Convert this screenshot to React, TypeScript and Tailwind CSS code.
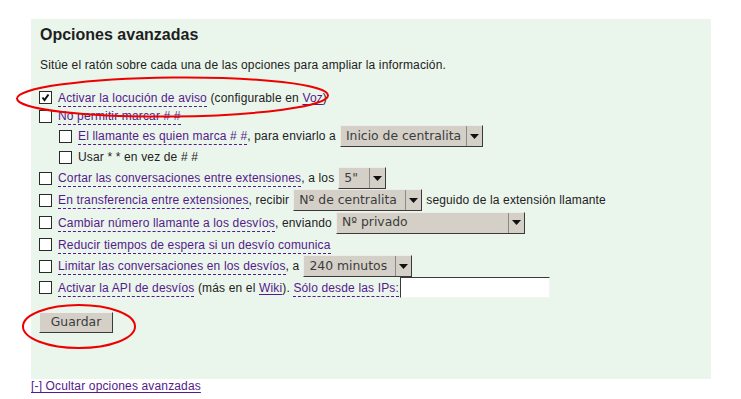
import React from 'react';

const Dashed: React.FC<{ children: React.ReactNode }> = ({ children }) => (
  <span className="text-[#551a8b] border-b border-dashed border-[#551a8b] pb-[1px]">{children}</span>
);

const Link: React.FC<{ children: React.ReactNode }> = ({ children }) => (
  <span className="text-[#551a8b] underline underline-offset-[2px]">{children}</span>
);

const Check: React.FC<{ checked?: boolean }> = ({ checked }) => (
  <span className="w-[13px] h-[13px] shrink-0 border border-[#2a2a2a] bg-white flex items-center justify-center">
    {checked && (
      <svg width="11" height="11" viewBox="0 0 11 11">
        <path d="M2.5 5.5 L4.5 8 L8.5 2.5" fill="none" stroke="#111" strokeWidth="2" />
      </svg>
    )}
  </span>
);

const Select: React.FC<{ value: string; width: string }> = ({ value, width }) => (
  <div
    className={`ml-[4px] flex h-[22px] shrink-0 bg-[#d4d0c8] border border-t-[#eeece8] border-l-[#eeece8] border-r-[#3a3a3a] border-b-[#3a3a3a] text-[12.4px] font-normal tracking-normal text-[#3c3c3c] font-['DejaVu_Sans',sans-serif] ${width}`}
  >
    <span className="flex-1 flex items-center pl-[5px] whitespace-pre">{value}</span>
    <span className="w-[16px] flex items-center justify-center border-l border-l-[#8a8a8a]">
      <svg width="9" height="5" viewBox="0 0 9 5">
        <path d="M0 0 H9 L4.5 5 Z" fill="#111" />
      </svg>
    </span>
  </div>
);

export default function App() {
  return (
    <div className="relative w-[741px] h-[399px] bg-white overflow-hidden font-['Liberation_Sans',Arial,sans-serif] text-[12px] tracking-[0.15px] text-[#222]">
      <div className="pl-[31px] pt-[19px]">
        <div className="w-[680px] h-[360px] bg-[#eaf5ec] pl-[8px] pt-[7px]">
          <h2 className="pl-[1px] text-[16px] font-bold leading-[18px] tracking-normal text-[#1e1e1e]">Opciones avanzadas</h2>
          <p className="pl-[1px] mt-[14px] leading-[15px]">
            Sitúe el ratón sobre cada una de las opciones para ampliar la información.
          </p>

          <div className="mt-[15px] flex flex-col">
            <div className="flex items-center h-[19px]">
              <Check checked />
              <span className="ml-[6px] whitespace-pre">
                <Dashed>Activar la locución de aviso</Dashed> (configurable en <Link>Voz</Link>)
              </span>
            </div>
            <div className="flex items-center h-[18px]">
              <Check />
              <span className="ml-[6px]">
                <Dashed>No permitir marcar # #</Dashed>
              </span>
            </div>
            <div className="flex items-center h-[22px] pl-[20px]">
              <Check />
              <span className="ml-[6px] whitespace-pre">
                <Dashed>El llamante es quien marca # #</Dashed>, para enviarlo a
              </span>
              <Select value="Inicio de centralita" width="w-[143px]" />
            </div>
            <div className="flex items-center h-[20px] pl-[20px]">
              <Check />
              <span className="ml-[6px]">Usar * * en vez de # #</span>
            </div>
            <div className="flex items-center h-[22px]">
              <Check />
              <span className="ml-[6px] whitespace-pre">
                <Dashed>Cortar las conversaciones entre extensiones</Dashed>, a los
              </span>
              <Select value={'5"'} width="w-[48px]" />
            </div>
            <div className="flex items-center h-[22px]">
              <Check />
              <span className="ml-[6px] whitespace-pre">
                <Dashed>En transferencia entre extensiones</Dashed>, recibir
              </span>
              <Select value="Nº de centralita" width="w-[129px]" />
              <span className="ml-[4px]">seguido de la extensión llamante</span>
            </div>
            <div className="flex items-center h-[23px]">
              <Check />
              <span className="ml-[6px] whitespace-pre">
                <Dashed>Cambiar número llamante a los desvíos</Dashed>, enviando
              </span>
              <Select value="Nº privado" width="w-[189px]" />
            </div>
            <div className="flex items-center h-[21px]">
              <Check />
              <span className="ml-[6px]">
                <Dashed>Reducir tiempos de espera si un desvío comunica</Dashed>
              </span>
            </div>
            <div className="flex items-center h-[22px]">
              <Check />
              <span className="ml-[6px] whitespace-pre">
                <Dashed>Limitar las conversaciones en los desvíos</Dashed>, a
              </span>
              <Select value="240 minutos" width="w-[109px]" />
            </div>
            <div className="flex items-center h-[21px]">
              <Check />
              <span className="ml-[6px] whitespace-pre">
                <Dashed>Activar la API de desvíos</Dashed> (más en el <Link>Wiki</Link>). <Dashed>Sólo desde las IPs:</Dashed>
              </span>
              <input
                className="ml-[1px] w-[150px] h-[21px] bg-white border border-t-[#3a3a3a] border-l-[#3a3a3a] border-r-[#f4f4f4] border-b-[#f4f4f4] outline-none"
                readOnly
              />
            </div>
          </div>

          <button className="mt-[14px] w-[74px] h-[21px] bg-[#d4d0c8] border border-t-[#f2f0ec] border-l-[#f2f0ec] border-r-[#3a3a3a] border-b-[#3a3a3a] text-[12.4px] font-normal tracking-normal text-[#3c3c3c] font-['DejaVu_Sans',sans-serif] flex items-center justify-center">
            Guardar
          </button>
        </div>
        <div className="leading-[15px]">
          <Link>[-] Ocultar opciones avanzadas</Link>
        </div>
      </div>

      <svg className="absolute inset-0 pointer-events-none" width="741" height="399">
        <ellipse cx="172.5" cy="97" rx="155.5" ry="19.5" fill="none" stroke="#ee0000" strokeWidth="2" transform="rotate(-0.6 172.5 97)" />
        <ellipse cx="79" cy="326.5" rx="56" ry="21.5" fill="none" stroke="#ee0000" strokeWidth="2" />
      </svg>
    </div>
  );
}
